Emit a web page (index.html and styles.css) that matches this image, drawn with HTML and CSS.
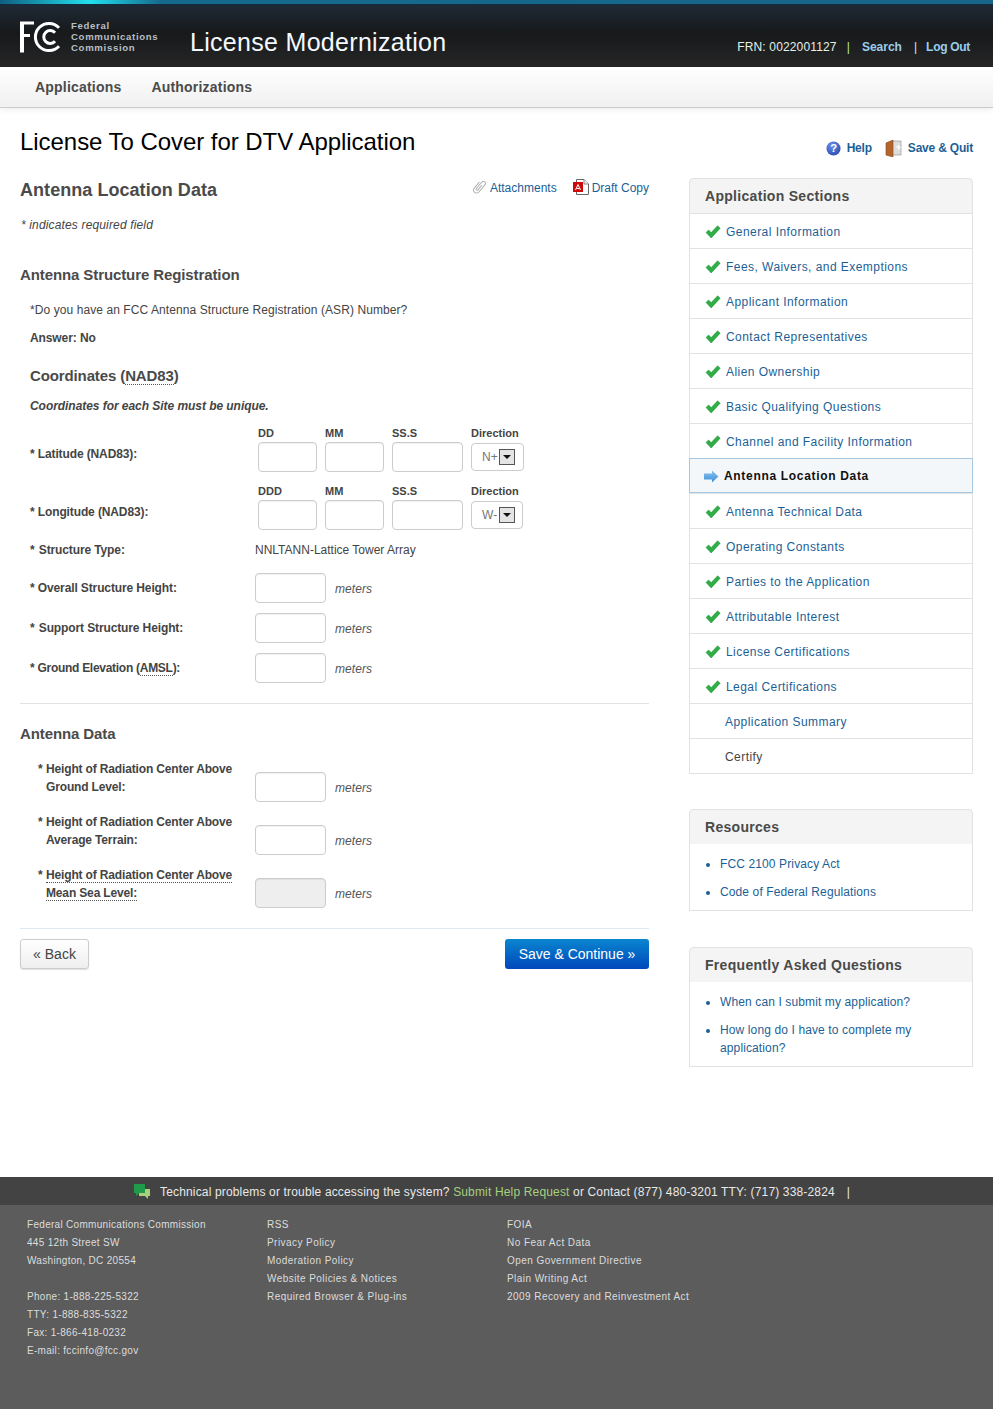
FILE: index.html
```html
<!DOCTYPE html>
<html lang="en">
<head>
<meta charset="utf-8">
<title>License To Cover for DTV Application</title>
<link rel="stylesheet" href="styles.css">
</head>
<body>
<svg class="defs" width="0" height="0" aria-hidden="true">
  <symbol id="check" viewBox="0 0 16 14"><path d="M1 7.5 L3.6 5 L6.2 7.6 L12.6 .8 L15.2 3.2 L6.2 13 Z" fill="#2fae45" stroke="#1f8f37" stroke-width=".5"/></symbol>
</svg>
<header class="masthead">
  <div class="strip"></div>
  <div class="brandbar">
    <svg class="logo" width="40" height="32" viewBox="0 0 40 32"><path d="M0 .5H14V3.5H4V13H10V16H4V31.5H0Z" fill="#fff"/><path d="M39 6.8A13.6 13.6 0 1 0 39 25.2" fill="none" stroke="#fff" stroke-width="3"/><path d="M35 11.8A6.4 6.4 0 1 0 35 20.2" fill="none" stroke="#fff" stroke-width="3"/></svg>
    <div class="agency">Federal<br>Communications<br>Commission</div>
    <div class="apptitle">License Modernization</div>
    <div class="usernav">
      <span class="frn">FRN: 0022001127</span><span class="pipe green">|</span><a class="toplink search">Search</a><span class="pipe second">|</span><a class="toplink logout">Log Out</a>
    </div>
  </div>
  <nav class="mainnav"><a>Applications</a><a>Authorizations</a></nav>
</header>

<div class="titlerow">
  <h1>License To Cover for DTV Application</h1>
  <div class="pageactions">
    <a class="action"><svg width="15" height="15" viewBox="0 0 16 16"><defs><radialGradient id="hg" cx=".4" cy=".3" r=".8"><stop offset="0" stop-color="#6f93e8"/><stop offset="1" stop-color="#2345b0"/></radialGradient></defs><circle cx="8" cy="8" r="7.5" fill="url(#hg)"/><text x="8" y="12" text-anchor="middle" class="qmark">?</text></svg>Help</a>
    <a class="action"><svg width="17" height="17" viewBox="0 0 17 17"><path d="M7 1H16V15H7Z" fill="#ddd" stroke="#999" stroke-width=".7"/><path d="M1 3L8 0V17L1 15Z" fill="#b5652c" stroke="#7c4317" stroke-width=".6"/><path d="M11 7H14M13 5.5L15 7.5L13 9.5" stroke="#fff" fill="none" stroke-width="1.2"/></svg>Save &amp; Quit</a>
  </div>
</div>

<div class="columns">
  <main class="content">
    <div class="contenthead">
      <h2>Antenna Location Data</h2>
      <div class="docs">
        <a class="doc"><svg width="15" height="16" viewBox="0 0 16 16"><g transform="rotate(40 8 8)"><path d="M4.5 4V12.5a3.2 3.2 0 0 0 6.4 0V2.6a2.2 2.2 0 0 0-4.4 0V11.4a1 1 0 0 0 2.2 0V5" fill="none" stroke="#aaa" stroke-width="1"/></g></svg>Attachments</a>
        <a class="doc"><svg width="16" height="16" viewBox="0 0 16 16"><path d="M3.5 .5H11L15.5 5V15.5H3.5Z" fill="#fff" stroke="#666"/><path d="M11 .5V5H15.5" fill="#eee" stroke="#888"/><rect x="0" y="3" width="10" height="10" fill="#cc0a0a"/><path d="M2.5 11L5 5.5L7.5 11M3.5 9.5H6.5" fill="none" stroke="#fff"/></svg>Draft Copy</a>
      </div>
    </div>
    <p class="required">* indicates required field</p>

    <h3 class="section first">Antenna Structure Registration</h3>
    <div class="inset">
      <p class="question">*Do you have an FCC Antenna Structure Registration (ASR) Number?</p>
      <p class="answer">Answer: No</p>
      <h3 class="coords">Coordinates (<span class="abbr">NAD83</span>)</h3>
      <p class="unique">Coordinates for each Site must be unique.</p>

      <div class="coordrow lat">
        <div class="rowlabel">* Latitude (NAD83):</div>
        <div class="field dd"><label>DD</label><span class="box"></span></div>
        <div class="field mm"><label>MM</label><span class="box"></span></div>
        <div class="field ss"><label>SS.S</label><span class="box"></span></div>
        <div class="field dir"><label>Direction</label><span class="select wide"><span class="seltext">N+</span><span class="arrow"></span></span></div>
      </div>
      <div class="coordrow lon">
        <div class="rowlabel">* Longitude (NAD83):</div>
        <div class="field dd"><label>DDD</label><span class="box"></span></div>
        <div class="field mm"><label>MM</label><span class="box"></span></div>
        <div class="field ss"><label>SS.S</label><span class="box"></span></div>
        <div class="field dir"><label>Direction</label><span class="select"><span class="seltext">W-</span><span class="arrow"></span></span></div>
      </div>
      <div class="typerow"><div class="rowlabel">* <span class="nudge">Structure Type:</span></div><div class="value">NNLTANN-Lattice Tower Array</div></div>
      <div class="measure"><div class="rowlabel">* Overall Structure Height:</div><span class="box m"></span><em>meters</em></div>
      <div class="measure"><div class="rowlabel">* <span class="nudge">Support Structure Height:</span></div><span class="box m"></span><em>meters</em></div>
      <div class="measure"><div class="rowlabel narrow">* Ground Elevation (<span class="abbr">AMSL</span>):</div><span class="box m"></span><em>meters</em></div>
    </div>

    <hr class="rule grey">
    <h3 class="section">Antenna Data</h3>
    <div class="inset2">
      <div class="measure tall"><div class="rowlabel two"><span class="ast">*</span><span>Height of Radiation Center Above<br>Ground Level:</span></div><span class="box m"></span><em>meters</em></div>
      <div class="measure tall"><div class="rowlabel two"><span class="ast">*</span><span>Height of Radiation Center Above<br>Average Terrain:</span></div><span class="box m"></span><em>meters</em></div>
      <div class="measure tall"><div class="rowlabel two"><span class="ast">*</span><span><span class="abbr">Height of Radiation Center Above</span><br><span class="abbr">Mean Sea Level:</span></span></div><span class="box m off"></span><em>meters</em></div>
    </div>
    <hr class="rule blue">
    <div class="buttons"><a class="btn back">« Back</a><a class="btn save">Save &amp; Continue »</a></div>
  </main>

  <aside class="sidebar">
    <section class="panel sections">
      <h4>Application Sections</h4>
      <ul class="steps">
        <li><svg class="tick"><use href="#check"/></svg><a>General Information</a></li>
        <li><svg class="tick"><use href="#check"/></svg><a>Fees, Waivers, and Exemptions</a></li>
        <li><svg class="tick"><use href="#check"/></svg><a>Applicant Information</a></li>
        <li><svg class="tick"><use href="#check"/></svg><a>Contact Representatives</a></li>
        <li><svg class="tick"><use href="#check"/></svg><a>Alien Ownership</a></li>
        <li><svg class="tick"><use href="#check"/></svg><a>Basic Qualifying Questions</a></li>
        <li><svg class="tick"><use href="#check"/></svg><a>Channel and Facility Information</a></li>
        <li class="current"><svg class="curarrow" width="15" height="13" viewBox="0 0 15 13"><defs><linearGradient id="ag" x1="0" y1="0" x2="0" y2="1"><stop offset="0" stop-color="#8ac4ee"/><stop offset="1" stop-color="#3b8fd6"/></linearGradient></defs><path d="M0 3.5H8V.5L14.5 6.5L8 12.5V9.5H0Z" fill="url(#ag)"/></svg><a>Antenna Location Data</a></li>
        <li><svg class="tick"><use href="#check"/></svg><a>Antenna Technical Data</a></li>
        <li><svg class="tick"><use href="#check"/></svg><a>Operating Constants</a></li>
        <li><svg class="tick"><use href="#check"/></svg><a>Parties to the Application</a></li>
        <li><svg class="tick"><use href="#check"/></svg><a>Attributable Interest</a></li>
        <li><svg class="tick"><use href="#check"/></svg><a>License Certifications</a></li>
        <li><svg class="tick"><use href="#check"/></svg><a>Legal Certifications</a></li>
        <li class="plain"><a>Application Summary</a></li>
        <li class="plain grey"><a>Certify</a></li>
      </ul>
    </section>
    <section class="panel resources">
      <h4>Resources</h4>
      <ul class="links">
        <li><a>FCC 2100 Privacy Act</a></li>
        <li><a>Code of Federal Regulations</a></li>
      </ul>
    </section>
    <section class="panel faq">
      <h4>Frequently Asked Questions</h4>
      <ul class="links">
        <li><a>When can I submit my application?</a></li>
        <li><a>How long do I have to complete my application?</a></li>
      </ul>
    </section>
  </aside>
</div>

<footer class="footer">
  <div class="helpbar">
    <svg width="18" height="16" viewBox="0 0 18 16"><path d="M6 5H17V12H15V15L12 12H6Z" fill="#a9cf7a"/><path d="M1 0H12V9H6L3 12V9H1Z" fill="#1f9c4a"/></svg>
    <span>Technical problems or trouble accessing the system? <a>Submit Help Request</a> or Contact (877) 480-3201 TTY: (717) 338-2824</span><span class="helppipe">|</span>
  </div>
  <div class="footcols">
    <div class="footcol c1">Federal Communications Commission<br>445 12th Street SW<br>Washington, DC 20554<br><br>Phone: 1-888-225-5322<br>TTY: 1-888-835-5322<br>Fax: 1-866-418-0232<br>E-mail: fccinfo@fcc.gov</div>
    <div class="footcol c2">RSS<br>Privacy Policy<br>Moderation Policy<br>Website Policies &amp; Notices<br>Required Browser &amp; Plug-ins</div>
    <div class="footcol c3">FOIA<br>No Fear Act Data<br>Open Government Directive<br>Plain Writing Act<br>2009 Recovery and Reinvestment Act</div>
  </div>
</footer>
</body>
</html>
```
FILE: styles.css
```css
* { box-sizing: border-box; }
html, body { margin: 0; padding: 0; }
body { font-family: "Liberation Sans", Arial, sans-serif; font-size: 12px; letter-spacing: .08px; color: #444; background: #fff; width: 993px; }
.defs { position: absolute; }
h1, h2, h3, h4, p, ul { margin: 0; padding: 0; }
ul { list-style: none; }

.masthead { display: block; }
.strip { height: 5px; background: linear-gradient(90deg, #0f5f80 0, #22e0ee 90px, #156a8d 160px, #186689 100%); border-bottom: 1px solid #0e2c3d; }
.brandbar { height: 62px; background: linear-gradient(#1f2a35 0, #17191b 45%, #262626 100%); display: flex; position: relative; padding: 15px 23px 0 20px; }
.logo { flex: none; margin: 1px 11px 0 0; }
.agency { width: 119px; font-size: 9.6px; font-weight: bold; line-height: 11px; letter-spacing: .68px; color: #b9bfc4; }
.apptitle { font-size: 25px; color: #f4f9ff; line-height: 30px; margin-top: 7px; letter-spacing: .3px; }
.usernav { margin-left: auto; margin-top: 18px; line-height: 18px; display: flex; color: #e4f0e8; }
.frn { letter-spacing: .15px; }
.pipe { margin: 0 12px 0 10px; color: #d6e6f2; }
.pipe.green { color: #b9e8a6; margin-right: 12px; }
.pipe.second { margin: 0 9px 0 12px; }
.toplink { color: #9bcdec; font-weight: bold; letter-spacing: 0; }
.logout { letter-spacing: -.3px; }
.mainnav { height: 41px; background: linear-gradient(#fff, #f0f0f0); border-bottom: 1px solid #ccc; box-shadow: 0 2px 6px rgba(0,0,0,.07); display: flex; gap: 30px; padding: 0 35px; align-items: center; }
.mainnav a { font-size: 14px; font-weight: bold; color: #4a4a4a; letter-spacing: .2px; }

.titlerow { display: flex; justify-content: space-between; padding: 19px 20px 0; height: 70px; }
h1 { font-size: 24px; font-weight: normal; color: #000; line-height: 30px; letter-spacing: -.05px; }
.pageactions { display: flex; gap: 13px; margin-top: 12px; }
.action { display: flex; align-items: center; gap: 6px; height: 18px; color: #1c5f96; font-weight: bold; letter-spacing: -.2px; }
.qmark { font: bold 12px "Liberation Sans", sans-serif; fill: #fff; }

.columns { display: flex; justify-content: space-between; padding: 0 20px; }
.content { width: 629px; }
.contenthead { display: flex; justify-content: space-between; height: 24px; }
h2 { font-size: 18px; line-height: 24px; color: #4a4a4a; letter-spacing: .05px; }
.docs { display: flex; gap: 16px; letter-spacing: 0; }
.doc { display: flex; gap: 3px; height: 20px; color: #1c5f96; line-height: 20px; align-items: flex-start; }
.doc svg { margin-top: 1px; }
.required { font-style: italic; margin-top: 14px; line-height: 18px; padding-left: 1px; letter-spacing: .15px; }
.section { font-size: 15px; font-weight: bold; color: #4a4a4a; line-height: 20px; letter-spacing: -.1px; }
.section.first { margin-top: 31px; }
.inset { padding-left: 10px; }
.question { margin-top: 16px; line-height: 18px; }
.answer { margin-top: 10px; line-height: 18px; font-weight: bold; letter-spacing: -.1px; }
.coords { font-size: 15px; line-height: 20px; color: #4a4a4a; margin-top: 19px; letter-spacing: -.12px; }
.abbr { border-bottom: 1px dotted #555; }
.unique { margin-top: 11px; font-style: italic; font-weight: bold; line-height: 18px; letter-spacing: -.05px; }

.coordrow { display: flex; height: 46px; margin-top: 12px; position: relative; }
.rowlabel { font-weight: bold; width: 225px; flex: none; letter-spacing: -.12px; }
.rowlabel.narrow { letter-spacing: -.28px; }
.nudge { margin-left: 1px; }
.coordrow .rowlabel { width: 228px; line-height: 18px; padding-top: 18px; }
.field { display: flex; flex-direction: column; margin-right: 8px; }
.field label { font-size: 11px; font-weight: bold; line-height: 12px; margin-bottom: 3px; letter-spacing: 0; }
.field.dd, .field.mm { width: 59px; }
.field.ss { width: 71px; }
.box { display: block; height: 30px; width: 100%; border: 1px solid #ccc; border-radius: 4px; background: #fff; box-shadow: inset 0 1px 1px rgba(0,0,0,.06); }
.select { display: flex; align-items: center; width: 52px; height: 28px; border: 1px solid #ccc; border-radius: 4px; padding-left: 10px; color: #777; margin-top: 1px; }
.select.wide { width: 53px; }
.seltext { width: 17px; }
.arrow { width: 16px; height: 16px; border: 1px solid #555; background: #e4e4e4; position: relative; }
.arrow::after { content: ""; position: absolute; left: 3px; top: 5px; border: 4px solid transparent; border-top-color: #111; border-bottom: 0; }
.typerow { display: flex; height: 18px; margin-top: 10px; line-height: 18px; }
.value { letter-spacing: 0; }
.measure { display: flex; align-items: flex-start; height: 30px; margin-top: 10px; }
.typerow + .measure { margin-top: 14px; }
.measure .rowlabel { line-height: 18px; padding-top: 6px; }
.box.m { width: 71px; flex: none; }
.measure em { margin-left: 9px; line-height: 18px; padding-top: 7px; color: #555; }
.rule { border: 0; height: 1px; margin: 0; }
.rule.grey { background: #e2e2e2; margin-top: 20px; }
.rule.blue { background: #dce8f2; margin-top: 20px; }
.section:not(.first) { margin-top: 20px; }
.inset2 { padding-left: 18px; padding-top: 28px; }
.measure.tall { margin-top: 23px; }
.measure.tall:first-child { margin-top: 0; }
.rowlabel.two { width: 217px; display: flex; margin-top: -12px; letter-spacing: -.15px; }
.measure .rowlabel.two { padding-top: 0; line-height: 18px; }
.ast { width: 8px; flex: none; }
.box.off { background: #eee; }
.buttons { display: flex; justify-content: space-between; margin-top: 10px; }
.btn { display: flex; align-items: center; height: 30px; border-radius: 3px; font-size: 14px; justify-content: center; letter-spacing: 0; }
.back { width: 69px; border: 1px solid #ccc; background: linear-gradient(#fff, #eee); color: #444; box-shadow: 0 1px 1px rgba(0,0,0,.12); }
.save { width: 144px; background: linear-gradient(#0a86cf, #0047bb); color: #fff; }

.sidebar { width: 284px; }
.panel { border: 1px solid #e2e2e2; border-top: 0; border-radius: 5px 5px 0 0; }
.panel h4 { font-size: 14px; line-height: 35px; height: 35px; background: #f4f4f4; color: #4a4a4a; padding-left: 15px; border-radius: 5px 5px 0 0; border-top: 1px solid #e2e2e2; margin: 0 -1px; border-left: 1px solid #e2e2e2; border-right: 1px solid #e2e2e2; letter-spacing: .3px; }
.steps li { height: 35px; border-top: 1px solid #e2e2e2; display: flex; align-items: center; padding: 1px 0 0 15px; font-size: 12px; letter-spacing: .45px; color: #1c5f96; }
.tick { width: 16px; height: 14px; margin-right: 5px; flex: none; }
.steps li.current { background: #f4f7fa; border: 1px solid #a5c9e4; margin: 0 -1px; padding-left: 14px; color: #111; font-weight: bold; letter-spacing: .68px; }
.curarrow { margin-right: 5px; flex: none; }
.steps li.plain { padding-left: 35px; }
.steps li.grey { color: #444; }
.resources { margin-top: 35px; }
.faq { margin-top: 36px; }
.links { padding: 11px 20px 0 30px; list-style: disc; color: #1c5f96; letter-spacing: .12px; }
.links li { line-height: 18px; margin-bottom: 10px; }
.links li:last-child { margin-bottom: 9px; }
.footer { margin-top: 110px; height: 232px; background: #5c5c5c; color: #ddd; }
.helpbar { height: 28px; background: #434343; display: flex; align-items: center; padding: 1px 0 0 133px; color: #e8e8e8; gap: 9px; letter-spacing: .16px; }
.helpbar a { color: #a6cf7e; }
.helppipe { margin-left: 3px; }
.footcols { display: flex; padding: 11px 0 0 27px; font-size: 10px; line-height: 18px; letter-spacing: .3px; }
.footcol { width: 240px; }
.footcol.c2, .footcol.c3 { letter-spacing: .44px; }
```
